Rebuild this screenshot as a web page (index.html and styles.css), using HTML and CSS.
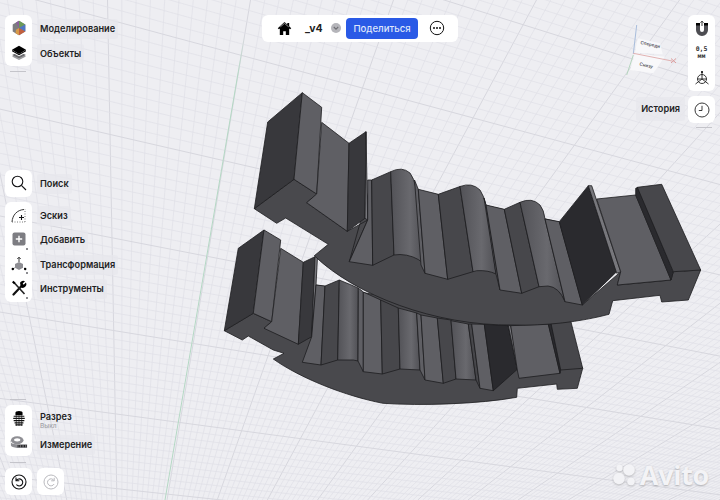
FILE: index.html
```html
<!DOCTYPE html>
<html lang="ru">
<head>
<meta charset="utf-8">
<title>Моделирование</title>
<link rel="stylesheet" href="styles.css">
</head>
<body>
<svg class="scene" viewBox="0 0 720 500" width="720" height="500" aria-hidden="true">
  <defs>
    <linearGradient id="curveA" x1="0" y1="0" x2="1" y2="0">
      <stop offset="0" stop-color="#525257"/><stop offset=".6" stop-color="#69696e"/><stop offset="1" stop-color="#505055"/>
    </linearGradient>
    <linearGradient id="axisFade" gradientUnits="userSpaceOnUse" x1="0" y1="35" x2="0" y2="75">
      <stop offset="0" stop-color="#b4d8c4" stop-opacity="0"/><stop offset="1" stop-color="#b4d8c4"/>
    </linearGradient>
  </defs>
  <g id="grid"></g>
  <line class="axis" x1="248" y1="15" x2="165" y2="500"/>

  <!-- lower piece -->
  <g class="model">
    <path class="flat" d="M224.3 330.7 242.3 340 248.3 336 273.3 350 284 353.3 273.3 359C300 378 345 396 383 403.3 420 406 480 404 516.7 397.3L517.3 388.3 556.7 384 557.3 389.3 577.3 388.3 582.7 368.3 551 323 316 285 311.700 336.700 264 328 271.7 321.7 253.3 313.3Z"/>
    <path class="dark" d="M238.3 248.3 264 230 253.3 313.3 224.3 330.7Z"/>
    <path class="light" d="M264 230 280.7 240 271.7 321.7 253.3 313.3Z"/>
    <path class="light" d="M280.7 248.3 303.3 262.3 298.3 344.3 264 328.3 271.7 321.7Z"/>
    <path class="dark" d="M303.3 262.3 315 256.7 311.7 336.7 298.3 344.3Z"/>
    <path class="edge" d="M315 256.7 317.5 256.7 316 285 311.7 336.7Z"/>
    <path class="light" d="M316 285 325 286 321 365 302.3 362.3 311.7 336.7Z"/>
    <path class="mid" d="M325 286 339.3 280 337.7 360 321 365Z"/>
    <path class="curve" d="M339.3 280 358.3 288 358 361 353.3 360 337.7 360Z"/>
    <path class="light" d="M358.3 288 363.3 292 363.3 371.7 358 361Z"/>
    <path class="light" d="M363.3 292 380.7 300 382.3 374 363.3 371.7Z"/>
    <path class="mid" d="M380.7 300 398.3 308 400 369 382.3 374Z"/>
    <path class="curve" d="M398.3 308 416.7 313 420 370 400 369Z"/>
    <path class="light" d="M416.7 313 421 315 425 380 420 370Z"/>
    <path class="light" d="M421 315 437.3 318 443.3 383.3 425 380Z"/>
    <path class="mid" d="M437.3 318 451 320 456 379 443.3 383.3Z"/>
    <path class="curve" d="M451 320.7 468.3 324 476 380 456 379Z"/>
    <path class="mid" d="M468.3 324 471.7 324 480 388.3 476 380Z"/>
    <path class="light" d="M471.7 324 484.3 324.3 493.3 390.7 480 388.3Z"/>
    <path class="black" d="M484.3 324.3 508.3 325.7 517.3 369.3 493.3 390.7Z"/>
    <path class="edge" d="M508.3 325.7 510.7 325.7 519 370 517.3 369.3Z"/>
    <path class="light" d="M510.7 325.7 548.3 324 560 373.3 519 378.3 517.3 370Z"/>
    <path class="black" d="M548.3 324 551 323.3 560.7 370 560 373.3Z"/>
    <path class="mid" d="M551 323.3 570.7 320.7 582.7 368.3 560.7 370Z"/>
  </g>

  <!-- upper piece -->
  <g class="model">
    <path class="flat" d="M254.3 208.7 276.7 223.3 285.7 218 328.3 244.3 314.3 255.7C355 295 435 326 513 325 545 326 580 322 609 314.3L612.7 300.7 660 295.3 661.7 302 688.3 300 700.7 270 673.3 271.7 671 280 617.3 285 620.7 271.7 582.3 305 559 222 372 180 349.3 261.7 367.7 220 347.3 231.3 306.7 202.7 316.7 194 294 179.3Z"/>
    <path class="dark" d="M267.7 122 302.3 92.7 294 179.3 254.3 208.7Z"/>
    <path class="light" d="M302.3 92.7 321.7 107.3 316.7 194 294 179.3Z"/>
    <path class="light" d="M321.7 122.3 349 143.3 347.3 231.3 306.7 202.7 316.7 194Z"/>
    <path class="dark" d="M349 143.3 366 131.7 365 218.3 347.3 231.3Z"/>
    <path class="edge" d="M366 131.7 367.7 220 365 218.3Z"/>
    <path class="light" d="M367.7 180 371.7 180 372.7 265.3 349.3 261.7 367.7 220Z"/>
    <path class="mid" d="M371.7 180 390.7 171.7 394 255 372.7 265.3Z"/>
    <path class="curve" d="M390.7 171.7Q402 166 410 173 414 178 416 188L423 263 Q414 255 400 254.5L394 255Z"/>
    <path class="light" d="M414.5 180 418.3 189.3 425 273.3 421 265Z"/>
    <path class="light" d="M418.3 189.3 438.3 194.3 447.7 279.3 425 273.3Z"/>
    <path class="mid" d="M438.3 194.3 460 186.5 473 271.7 447.7 279.3Z"/>
    <path class="curve" d="M460 186.5Q472 182 480 190 484 196 486 205L496 274Q488 270 476.7 270.7L473 271.7Z"/>
    <path class="light" d="M484 198 486 205 500 290 496 274Z"/>
    <path class="light" d="M486 205 504.3 209.3 521.7 293.3 500 290Z"/>
    <path class="mid" d="M504.3 209.3 520 202.3 539 286.7 521.7 293.3Z"/>
    <path class="curve" d="M520 202.3Q532 197 540 205 544 210 545 219L565 301.7Q559 287 548 286L539 286.7Z"/>
    <path class="light" d="M545 219 559.3 221.7 582.3 305 565 301.7Z"/>
    <path class="black" d="M559.3 221.7 588.3 185.7 616.7 271.7 582.3 305Z"/>
    <path class="edge" d="M588.3 185.7 591.7 185.7 620.7 271.7 616.7 273.3Z"/>
    <path class="light" d="M596.7 199 635.7 195 671 280 617.3 285 620.7 271.7Z"/>
    <path class="black" d="M635.7 188.3 638 187.3 673.3 271.7 671 280 635.7 195Z"/>
    <path class="mid" d="M637.3 187.3 661.7 184.3 700.7 270 673.3 271.7Z"/>
  </g>

  <!-- orientation cube -->
  <g class="cube">
    <path class="cube-face" d="M637.7 38.3 660 43.3 662.7 54.3 635 52.7Z"/>
    <path class="cube-face" d="M635 53.3 665 56.7 653.3 73.3 630 70Z"/>
    <text class="cube-text" x="650" y="46" transform="rotate(12 650 46)">Спереди</text>
    <text class="cube-text" x="646" y="67" transform="rotate(12 646 67)">Снизу</text>
    <line class="axis-b" x1="636.7" y1="25" x2="633.3" y2="54"/>
    <line class="axis-r" x1="633.3" y1="53.3" x2="672" y2="61"/>
    <line class="axis-g" x1="633.3" y1="55" x2="626.7" y2="75"/>
    <path class="axis-x" d="M671 58.5 676 63M676 58.5 671 63"/>
  </g>
</svg>

<div class="topbar-wrap">
  <div class="topbar">
    <svg class="home" viewBox="0 0 16 16"><path d="M8 1 .8 7.6 2 8.8 3 8V15h3.6v-4h2.8v4H13V8l1 .8 1.2-1.2L13 5.600V2h-2v1.800Z"/><path class="home-line" d="M3.500 6.300 8 2.500l4.500 3.800"/></svg>
    <span class="doc-name">_v4</span>
    <span class="doc-chevron"><svg viewBox="0 0 10 10"><path d="M2.800 4 5 6.200 7.200 4"/></svg></span>
    <button class="share">Поделиться</button>
    <svg class="more" viewBox="0 0 16 16"><circle class="more-ring" cx="8" cy="8" r="6.700"/><circle cx="5" cy="8" r="1"/><circle cx="8" cy="8" r="1"/><circle cx="11" cy="8" r="1"/></svg>
  </div>
</div>

<div class="left">
  <section class="sec">
    <div class="group">
      <div class="panel">
        <div class="cell">
          <svg class="ico" viewBox="0 0 16 16">
            <path fill="#7d7d80" d="M8 .8 14.300 4.400v7.200L8 15.200 1.700 11.600V4.400Z"/>
            <path fill="#6c9a58" d="M8 .8 14.300 4.400 8 8Z"/>
            <path fill="#4f76c4" d="M14.300 4.400v7.200L8 8Z"/>
            <path fill="#c2603f" d="M8 8 14.300 11.600 8 15.200Z"/>
            <path fill="#d79a49" d="M8 8V15.200L4.500 13.200 5 9.800Z"/>
            <path fill="#8a5f9a" d="M8 .8 5 2.500 8 8Z"/>
          </svg>
        </div>
        <div class="cell">
          <svg class="ico" viewBox="0 0 16 16">
            <path fill="#9b9b9e" d="M8 8.500 15 11.500 8 15 1 11.500Z"/>
            <path fill="#fff" d="M8 6 15.500 9.500 8 13.500.5 9.500Z"/>
            <path fill="#6d6d70" d="M8 6.800 15 10 8 13.500 1 10Z"/>
            <path fill="#fff" d="M8 3.800 15.500 7.300 8 11.300.5 7.300Z"/>
            <path fill="#000" d="M8 .8 15 4.800 8 9 1 4.800Z"/>
            <path fill="#000" d="M1 5 1 6.300 8 10.300 15 6.300 15 5 8 9Z"/>
          </svg>
        </div>
      </div>
      <div class="labels">
        <div class="cell"><span class="label">Моделирование</span></div>
        <div class="cell"><span class="label">Объекты</span></div>
      </div>
    </div>
    <div class="grip"></div>
  </section>

  <section class="sec sec-mid">
    <div class="group">
      <div class="panel panel-solo">
        <svg class="ico" viewBox="0 0 16 16"><circle class="stroke" cx="6.500" cy="6.500" r="5.300"/><path class="stroke" d="M10.400 10.400 15 15"/></svg>
      </div>
      <div class="labels labels-solo"><span class="label">Поиск</span></div>
    </div>
    <div class="group">
      <div class="panel">
        <div class="cell">
          <svg class="ico" viewBox="0 0 16 16"><path class="stroke-thin" d="M1 15C1.500 8 6 3 13 2.500"/><path class="dots" d="M1 15H14M14 15V2"/><path class="stroke" d="M10.500 8v5M8 10.500h5"/></svg>
        </div>
        <div class="cell cell-tick">
          <svg class="ico" viewBox="0 0 16 16"><rect fill="#7d7d82" x="1.500" y="1.500" width="13" height="13" rx="2"/><path class="plus" d="M8 4.800v6.400M4.800 8h6.400"/></svg>
        </div>
        <div class="cell cell-tick">
          <svg class="ico" viewBox="0 0 16 16"><path fill="#8e8e93" d="M8 6 12 8 12 11.800 8 14 4 11.800 4 8Z"/><path class="stroke-thin" d="M8 6V1.500M6.300 3 8 1.200 9.700 3M3.500 12 1 13.500M13 12 15 13.500"/><circle cx="1.800" cy="13" r="1.200"/><circle cx="14.200" cy="13" r="1.200"/></svg>
        </div>
        <div class="cell cell-tick">
          <svg class="ico" viewBox="0 0 16 16"><path class="stroke-bold" d="M2.500 14.500 10.500 6"/><path d="M9 2.800a3.600 3.600 0 0 1 5-1.600l-2.300 2.300 1 1.200 2.200-2.200a3.600 3.600 0 0 1-5 4.800Z"/><path class="stroke-tool" d="M3 2.500 13.500 14"/><path d="M1 2.200 2.500.8l2 2-1.400 1.500Z"/></svg>
        </div>
      </div>
      <div class="labels">
        <div class="cell"><span class="label">Эскиз</span></div>
        <div class="cell"><span class="label">Добавить</span></div>
        <div class="cell"><span class="label">Трансформация</span></div>
        <div class="cell"><span class="label">Инструменты</span></div>
      </div>
    </div>
  </section>

  <section class="sec">
    <div class="grip grip-top"></div>
    <div class="group">
      <div class="panel panel-tall">
        <div class="cell cell-section">
          <svg class="ico" viewBox="0 0 16 18"><path d="M4 3a4 2 0 0 1 8 0v3H4Z"/><path class="hatch" d="M2 7h12M1.500 9.500h13M2 12h12M3 14.500h10M4 16.800h8"/><path class="hatch-v" d="M5 6v12M8 6v12M11 6v12"/></svg>
        </div>
        <div class="cell">
          <svg class="ico ico-wide" viewBox="0 0 20 16"><ellipse fill="#8e8e93" cx="8" cy="5.500" rx="7" ry="4.500"/><ellipse fill="#fff" cx="8" cy="5" rx="3.500" ry="1.800"/><path fill="#8e8e93" d="M1 6v5a7 3 0 0 0 7 3H19v-4H8A7 3 0 0 1 1 6Z"/><path class="tape" d="M8.500 12h10"/></svg>
        </div>
      </div>
      <div class="labels labels-bottom">
        <div class="cell cell-section-label"><span class="label label-plain">Разрез</span><span class="sublabel">Выкл</span></div>
        <div class="cell"><span class="label">Измерение</span></div>
      </div>
    </div>
    <div class="grip"></div>
    <div class="history-btns">
      <div class="panel panel-solo">
        <svg class="ico" viewBox="0 0 16 16"><circle class="stroke" cx="8" cy="8" r="7"/><path class="stroke" d="M5.300 6.500a3.500 3.500 0 1 1 .1 4M5 3.500v3.300h3.300"/></svg>
      </div>
      <div class="panel panel-solo">
        <svg class="ico ico-muted" viewBox="0 0 16 16"><circle class="stroke-muted" cx="8" cy="8" r="7"/><path class="stroke-muted" d="M11 6.500a3.500 3.500 0 1 0 .1 3.500M11.200 3.800v3h-3"/></svg>
      </div>
    </div>
  </section>
</div>

<div class="right">
  <div class="panel panel-tools">
    <svg class="ico" viewBox="0 0 16 16"><path fill="#4d4d52" d="M2 5h4v5a2 2 0 0 0 4 0V5h4v5a6 6 0 0 1-12 0Z"/><path fill="#000" d="M2 3h4v2.500H2ZM10 3h4v2.500h-4Z"/><path class="stroke-thin" d="M8 6V1.200M6.500 2.700 8 1.200l1.500 1.500"/></svg>
    <div class="snap">0,5<br>мм</div>
    <svg class="ico" viewBox="0 0 16 16"><circle class="stroke-thin" cx="8" cy="9" r="4.500"/><path class="stroke-thin" d="M8 9V1.500M8 9 1.500 14M8 9 14.500 14M3.500 9h9"/><circle cx="8" cy="2" r="1"/></svg>
  </div>
  <div class="right-row">
    <span class="label label-history">История</span>
    <div class="panel panel-solo">
      <svg class="ico" viewBox="0 0 16 16"><circle class="stroke-thin" cx="8" cy="8" r="7"/><path class="stroke-thin" d="M8 3.800V8.500H4.800"/></svg>
    </div>
  </div>
  <div class="grip grip-right"></div>
</div>

<div class="watermark">
  <svg class="avito-mark" viewBox="0 0 24 24"><circle cx="6.500" cy="5" r="3.200"/><circle cx="16" cy="7" r="5.800"/><circle cx="6" cy="15.500" r="5.800"/><circle cx="18" cy="18.500" r="3.800"/></svg>
  <span class="avito-text">Avito</span>
</div>

<script src="grid.js"></script>
</body>
</html>
```

FILE: styles.css
```css
* { box-sizing: border-box; }
html, body { margin: 0; padding: 0; }
body {
  width: 720px;
  height: 500px;
  overflow: hidden;
  position: relative;
  background: #eeeef2;
  font-family: Inter, "Noto Sans", sans-serif;
  color: #1f1f24;
}

/* canvas */
.scene { position: absolute; inset: 0; display: block; }
.fine { stroke: #dfdfe6; stroke-width: .7; }
.major { stroke: #d7d7de; stroke-width: 1; }
.axis { stroke: url(#axisFade); stroke-width: 1; }
.model path { stroke: #1d1d20; stroke-width: .8; stroke-linejoin: round; }
.flat { fill: #49494d; }
.dark { fill: #38383c; }
.light { fill: #5f5f64; }
.mid { fill: #47474b; }
.edge { fill: #77777c; }
.black { fill: #2a2a2e; }
.curve { fill: url(#curveA); }

.cube-face { fill: #f8f8fa; }
.cube-text { font: 600 4.500px Inter, sans-serif; fill: #55555a; text-anchor: middle; }
.axis-b { stroke: #a8bddc; stroke-width: 1; }
.axis-r { stroke: #e2b3b3; stroke-width: 1; }
.axis-g { stroke: #b6d6bf; stroke-width: 1; }
.axis-x { stroke: #dc9d9d; stroke-width: 1; fill: none; }

/* top bar */
.topbar-wrap {
  position: absolute;
  top: 15px;
  left: 0;
  right: 0;
  display: flex;
  justify-content: center;
}
.topbar {
  width: 196px;
  height: 27px;
  display: flex;
  align-items: center;
  background: #fff;
  border-radius: 6px;
  padding-left: 15px;
}
.home { width: 15px; height: 15px; fill: #000; flex: none; margin-top: -1px; }
.home-line { fill: none; stroke: #fff; stroke-width: .6; }
.doc-name { margin-left: 13px; width: 20px; font-size: 10.500px; font-weight: 700; color: #222; margin-top: -1px; }
.doc-chevron {
  margin-left: 6px;
  width: 10px;
  height: 10px;
  border-radius: 50%;
  background: #b5b5ba;
  display: flex;
  margin-top: -1px;
}
.doc-chevron svg { width: 10px; height: 10px; fill: none; stroke: #6f6f74; stroke-width: 1.100; }
.share {
  margin-left: 5px;
  width: 72px;
  height: 21px;
  border: 0;
  border-radius: 4px;
  background: #2a5ae6;
  color: #dfe6fb;
  font: 500 9.600px Inter, sans-serif;
  padding: 0;
}
.more { margin-left: 11px; width: 16px; height: 16px; fill: #111; flex: none; margin-top: -1px; }
.more-ring { fill: none; stroke: #111; stroke-width: 1; }

/* left column */
.left {
  position: absolute;
  left: 5px;
  top: 15px;
  bottom: 5px;
  display: flex;
  flex-direction: column;
  justify-content: space-between;
}
.sec { display: flex; flex-direction: column; }
.sec-mid { gap: 5px; }
.group { display: flex; gap: 5px; }
.panel {
  width: 27px;
  flex: none;
  padding: 1px 0;
  display: flex;
  flex-direction: column;
  align-items: center;
  background: #fff;
  border-radius: 6px;
}
.panel-solo { height: 27px; justify-content: center; padding: 0; }
.panel-tall { height: 51px; }
.labels { display: flex; flex-direction: column; padding: 2px 0 0; align-items: flex-start; }
.labels-solo { justify-content: center; padding: 2px 0 0; }
.cell {
  height: 24.500px;
  display: flex;
  align-items: center;
  justify-content: center;
  flex: none;
  position: relative;
}
.cell-tick::after {
  content: "";
  position: absolute;
  right: 4px;
  bottom: 2px;
  width: 2px;
  height: 2px;
  background: #8c8c90;
}
.panel .cell { width: 100%; }
.label {
  display: inline-block;
  padding: 3px;
  line-height: 14px;
  font-size: 9.200px;
  font-weight: 600;
  background: rgba(231, 231, 236, .75);
  border-radius: 3px;
  white-space: nowrap;
}
.label-plain { background: none; padding: 0 3px; line-height: 12px; }
.sublabel {
  padding: 0 3px;
  font-size: 6.500px;
  line-height: 7px;
  color: #a2a2a8;
  font-weight: 500;
}
.labels-bottom { padding-top: 6px; }
.cell-section-label { flex-direction: column; align-items: flex-start; justify-content: flex-start; height: 21.500px; }
.ico { width: 16px; height: 16px; flex: none; }
.ico-wide { width: 18px; height: 15px; }
.ico-muted { opacity: .95; }
.stroke { fill: none; stroke: #141416; stroke-width: 1.100; }
.stroke-thin { fill: none; stroke: #222; stroke-width: .9; }
.stroke-bold { fill: none; stroke: #111; stroke-width: 2.200; stroke-linecap: round; }
.stroke-tool { fill: none; stroke: #222; stroke-width: 1.600; }
.stroke-muted { fill: none; stroke: #b5b5ba; stroke-width: 1; }
.dots { fill: none; stroke: #555; stroke-width: .8; stroke-dasharray: 1 1.500; }
.plus { fill: none; stroke: #fff; stroke-width: 1.400; }
.hatch { fill: none; stroke: #111; stroke-width: 1.300; }
.hatch-v { fill: none; stroke: #111; stroke-width: .7; }
.tape { fill: none; stroke: #111; stroke-width: 2.400; stroke-dasharray: 1 .8; }
.grip {
  width: 16px;
  height: 1px;
  margin: 5px 0 0 5px;
  background: #c4c4ca;
}
.grip-top { margin: 0 0 5px 5px; }
.history-btns { display: flex; gap: 5px; margin-top: 5px; }

/* right column */
.right {
  position: absolute;
  right: 5px;
  top: 15px;
  display: flex;
  flex-direction: column;
  align-items: flex-end;
  gap: 5px;
}
.panel-tools {
  height: 76px;
  padding: 5px 0;
  justify-content: space-between;
}
.snap {
  font-family: "DejaVu Sans Mono", monospace;
  font-size: 6.500px;
  font-weight: 700;
  line-height: 7.500px;
  text-align: center;
  color: #333;
}
.right-row { display: flex; align-items: center; gap: 3px; }
.label-history { padding: 5px; margin-top: -1px; }
.grip-right { margin: -1px 3px 0 0; }

/* watermark */
.watermark {
  position: absolute;
  right: 11px;
  bottom: 12px;
  display: flex;
  align-items: center;
  gap: 3px;
  color: #f3f3f6;
}
.avito-mark {
  width: 24px;
  height: 24px;
  fill: #f3f3f6;
  filter: drop-shadow(0 1px 1px rgba(0, 0, 0, .22));
}
.avito-text {
  font: 700 27px/26px "Open Sans", sans-serif;
  letter-spacing: -.3px;
  text-shadow: 0 1px 2px rgba(0, 0, 0, .25);
}
```

FILE: grid.js
```js
// Builds the perspective floor grid: two fans of lines, each running to its own vanishing point.
(function () {
  var grid = document.getElementById('grid');
  var NS = 'http://www.w3.org/2000/svg';

  function add(x1, y1, x2, y2, major) {
    var line = document.createElementNS(NS, 'line');
    line.setAttribute('x1', x1);
    line.setAttribute('y1', y1);
    line.setAttribute('x2', x2);
    line.setAttribute('y2', y2);
    line.setAttribute('class', major ? 'major' : 'fine');
    grid.appendChild(line);
  }

  var vx = 122, vy = 770;
  for (var k = -120; k <= 130; k++) {
    var x0 = 250.5 + k * 14.3;
    var x500 = vx + (x0 - vx) * (vy - 500) / vy;
    add(x0, 0, x500, 500, k % 10 === 0);
  }

  var wx = 3000, wy = 800;
  var y0 = -360, i = 0;
  while (y0 < 640) {
    var slope = (wy - y0) / wx;
    add(-10, y0 - 10 * slope, 730, y0 + 730 * slope, (i + 3) % 10 === 0);
    y0 += Math.max(5, 13 - Math.max(0, y0 + 60) * 0.0106);
    i++;
  }
})();
```
